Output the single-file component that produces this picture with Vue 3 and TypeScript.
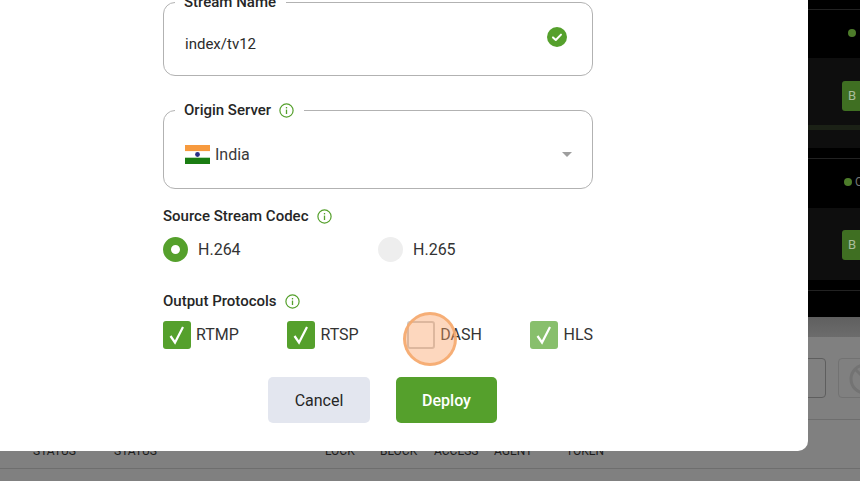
<script setup lang="ts">
const protocols = [
  { name: 'RTMP', state: 'on' },
  { name: 'RTSP', state: 'on' },
  { name: 'DASH', state: 'off' },
  { name: 'HLS', state: 'locked' }
]
const headers = [
  { label: 'STATUS', width: 81 },
  { label: 'STATUS', width: 211 },
  { label: 'LOCK', width: 55 },
  { label: 'BLOCK', width: 54 },
  { label: 'ACCESS', width: 60 },
  { label: 'AGENT', width: 72 },
  { label: 'TOKEN', width: 40 }
]
</script>

<template>
  <div class="page">
    <!-- dimmed page behind the dialog -->
    <div class="dark-panel">
      <div class="spacer" style="height: 9px"></div>
      <div class="stream-head"><span class="dot"></span></div>
      <div class="stream-row">
        <div class="row-btn">B</div>
        <div class="row-bar"></div>
      </div>
      <div class="spacer tail"></div>
      <div class="stream-head second"><span class="dot"></span><span class="dot-label">O</span></div>
      <div class="stream-row short">
        <div class="row-btn">B</div>
      </div>
      <div class="spacer tail"></div>
      <div class="spacer last"></div>
    </div>
    <div class="grey-panel">
      <div class="grey-shade"></div>
      <div class="tool-row">
        <div class="tool-box"></div>
        <div class="tool-box faint">
          <svg width="34" height="34" viewBox="0 0 34 34" fill="none" stroke="#737373" stroke-width="3">
            <circle cx="17" cy="17" r="14" />
            <path d="M7 7l20 20" />
          </svg>
        </div>
      </div>
      <div class="table-head">
        <span v-for="(h, i) in headers" :key="i" :style="{ width: h.width + 'px' }">{{ h.label }}</span>
      </div>
    </div>

    <!-- dialog -->
    <div class="modal">
      <div class="form">
        <fieldset class="field first">
          <legend>Stream Name</legend>
          <div class="field-body">
            <span class="value">index/tv12</span>
            <svg class="ok" width="20" height="20" viewBox="0 0 20 20">
              <circle cx="10" cy="10" r="10" fill="#55a02c" />
              <path d="M6 10.4l2.8 2.6L14 7.6" fill="none" stroke="#fff" stroke-width="2" stroke-linecap="round" stroke-linejoin="round" />
            </svg>
          </div>
        </fieldset>

        <fieldset class="field second">
          <legend>
            Origin Server
            <svg class="info" width="15" height="15" viewBox="0 0 15 15" fill="none" stroke="#55a02c">
              <circle cx="7.5" cy="7.5" r="6.6" stroke-width="1.2" />
              <path d="M7.5 6.6v4.4" stroke-width="1.3" />
              <path d="M7.5 4v1.4" stroke-width="1.3" />
            </svg>
          </legend>
          <div class="field-body">
            <div class="country">
              <svg width="25" height="19" viewBox="0 0 25 19">
                <rect width="25" height="6.3" fill="#f79a3e" />
                <rect y="6.3" width="25" height="6.4" fill="#fff" />
                <rect y="12.7" width="25" height="6.3" fill="#1a7d12" />
                <circle cx="12.5" cy="9.5" r="2.4" fill="#2b2f86" />
              </svg>
              <span>India</span>
            </div>
            <span class="caret"></span>
          </div>
        </fieldset>

        <div class="label codec-label">
          Source Stream Codec
          <svg class="info" width="15" height="15" viewBox="0 0 15 15" fill="none" stroke="#55a02c">
            <circle cx="7.5" cy="7.5" r="6.6" stroke-width="1.2" />
            <path d="M7.5 6.6v4.4" stroke-width="1.3" />
            <path d="M7.5 4v1.4" stroke-width="1.3" />
          </svg>
        </div>
        <div class="radios">
          <div class="radio-item"><span class="radio on"></span>H.264</div>
          <div class="radio-item"><span class="radio"></span>H.265</div>
        </div>

        <div class="label output-label">
          Output Protocols
          <svg class="info" width="15" height="15" viewBox="0 0 15 15" fill="none" stroke="#55a02c">
            <circle cx="7.5" cy="7.5" r="6.6" stroke-width="1.2" />
            <path d="M7.5 6.6v4.4" stroke-width="1.3" />
            <path d="M7.5 4v1.4" stroke-width="1.3" />
          </svg>
        </div>
        <div class="checks">
          <div v-for="p in protocols" :key="p.name" class="check-item">
            <span :class="['check', p.state]">
              <svg v-if="p.state !== 'off'" width="28" height="28" viewBox="0 0 28 28" fill="none" stroke="#fff" stroke-width="2.2">
                <path d="M7.5 15l4.5 6.5L20 6" />
              </svg>
              <span v-if="p.name === 'DASH'" class="pulse"></span>
            </span>
            {{ p.name }}
          </div>
        </div>

        <div class="actions">
          <button class="btn cancel">Cancel</button>
          <button class="btn deploy">Deploy</button>
        </div>
      </div>
    </div>
  </div>
</template>

<style scoped>
.page {
  position: relative;
  width: 860px;
  height: 481px;
  overflow: hidden;
  background: #808080;
  font-family: Roboto, "Liberation Sans", sans-serif;
  color: #262626;
}

.dark-panel {
  height: 317px;
  background: #000;
  padding-left: 808px;
  box-sizing: border-box;
}
.spacer {
  background: #000;
}
.spacer.tail {
  height: 10px;
  border-bottom: 1px solid #222;
}
.spacer.last {
  height: 20px;
}
.stream-head {
  height: 45px;
  border-top: 1px solid #222;
  display: flex;
  align-items: center;
  gap: 3px;
  padding-left: 40px;
  padding-bottom: 3px;
  box-sizing: content-box;
}
.stream-head.second {
  padding-left: 36px;
  height: 46px;
  border-top: 0;
}
.dot {
  width: 8px;
  height: 8px;
  border-radius: 50%;
  background: #4d7c2a;
  flex-shrink: 0;
}
.dot-label {
  color: #777;
  font-size: 12px;
}
.stream-row {
  height: 90px;
  background: #0e0e0e;
  padding: 23px 0 0 34px;
  box-sizing: border-box;
  position: relative;
}
.stream-row.short {
  height: 72px;
  padding-top: 22px;
}
.row-btn {
  width: 40px;
  height: 30px;
  line-height: 30px;
  padding-left: 6px;
  box-sizing: border-box;
  background: #3f6f22;
  border-radius: 3px 0 0 3px;
  color: #a9bd9c;
  font-size: 13px;
}
.row-bar {
  height: 5px;
  margin: 14px 0 0 -34px;
  background: #1b2116;
}

.grey-panel {
  height: 164px;
  position: relative;
}
.grey-shade {
  height: 20px;
  background: linear-gradient(#5f5f5f, #6c6c6c);
}
.tool-row {
  display: flex;
  gap: 12px;
  margin: 21px 0 0 786px;
}
.tool-box {
  width: 40px;
  height: 40px;
  box-sizing: border-box;
  border: 1px solid #5e5e5e;
  border-radius: 4px;
  flex-shrink: 0;
}
.tool-box.faint {
  width: 60px;
  border-color: #727272;
  border-radius: 4px 0 0 4px;
  padding: 3px 0 0 9px;
}
.table-head {
  height: 50px;
  margin-top: 21px;
  border-top: 1px solid #6e6e6e;
  border-bottom: 1px solid #6e6e6e;
  box-sizing: border-box;
  padding: 24px 0 0 33px;
  display: flex;
  font-size: 12px;
  line-height: 14px;
  color: #1c1c1c;
}

.modal {
  position: absolute;
  left: 0;
  top: 0;
  width: 808px;
  height: 451px;
  background: #fff;
  border-radius: 0 0 10px 0;
  display: flex;
  flex-direction: column;
  justify-content: flex-end;
  padding: 0 0 28px 163px;
  box-sizing: border-box;
  overflow: hidden;
}
.form {
  width: 430px;
}

.field {
  margin: 0;
  padding: 0;
  border: 1px solid #b2b2b2;
  border-radius: 12px;
  min-width: 0;
}
.field.second {
  margin-top: 24px;
}
.field legend {
  margin-left: 11px;
  padding: 0 10px 0 9px;
  font-size: 15px;
  font-weight: 500;
  line-height: 20px;
  color: #262626;
  white-space: nowrap;
}
.field legend .info {
  margin-left: 4px;
}
.field-body {
  display: flex;
  align-items: center;
  justify-content: space-between;
  padding: 0 25px 0 21px;
  height: 63px;
}
.field.second .field-body {
  height: 68px;
  padding-right: 20px;
}
.value {
  font-size: 15px;
  color: #2b2b2b;
}
.ok {
  margin-bottom: 13px;
}
.country {
  display: flex;
  align-items: center;
  gap: 5px;
  font-size: 16px;
  color: #3a3a3a;
}
.caret {
  width: 0;
  height: 0;
  border-left: 5px solid transparent;
  border-right: 5px solid transparent;
  border-top: 5px solid #9e9e9e;
}
.info {
  vertical-align: -3px;
  margin-left: 5px;
}

.label {
  font-size: 15px;
  font-weight: 500;
  line-height: 20px;
  color: #262626;
}
.codec-label {
  margin-top: 17px;
}
.output-label {
  margin-top: 29px;
}
.radios {
  display: grid;
  grid-template-columns: 215px 215px;
  margin-top: 11px;
}
.radio-item {
  display: flex;
  align-items: center;
  gap: 10px;
  font-size: 16px;
  line-height: 25px;
  color: #333;
}
.radio {
  width: 25px;
  height: 25px;
  border-radius: 50%;
  background: #eeeeee;
  box-sizing: border-box;
}
.radio.on {
  background: #fff;
  border: 8px solid #55a02c;
}

.checks {
  display: flex;
  justify-content: space-between;
  margin-top: 10px;
}
.check-item {
  display: flex;
  align-items: center;
  gap: 5px;
  font-size: 16px;
  line-height: 28px;
  color: #333;
}
.check {
  position: relative;
  width: 28px;
  height: 28px;
  box-sizing: border-box;
  border-radius: 3px;
  display: block;
}
.check svg {
  display: block;
}
.check.on {
  background: #55a02c;
}
.check.locked {
  background: #88bf6c;
}
.check.off {
  border: 2px solid #c9c9c9;
}
.pulse {
  position: absolute;
  left: -6px;
  top: -11px;
  width: 54px;
  height: 54px;
  box-sizing: border-box;
  border-radius: 50%;
  background: rgba(251, 160, 100, 0.42);
  border: 3px solid rgba(245, 170, 110, 0.9);
  z-index: 2;
}

.actions {
  display: flex;
  gap: 26px;
  margin: 28px 0 0 105px;
}
.btn {
  height: 46px;
  border: 0;
  border-radius: 5px;
  font-family: inherit;
  font-size: 16px;
  padding: 0;
}
.cancel {
  width: 102px;
  background: #e3e6ef;
  color: #262626;
}
.deploy {
  width: 101px;
  background: #55a02c;
  color: #fff;
  font-weight: 500;
}
</style>

<style>
html,
body {
  margin: 0;
  background: #808080;
}
</style>
